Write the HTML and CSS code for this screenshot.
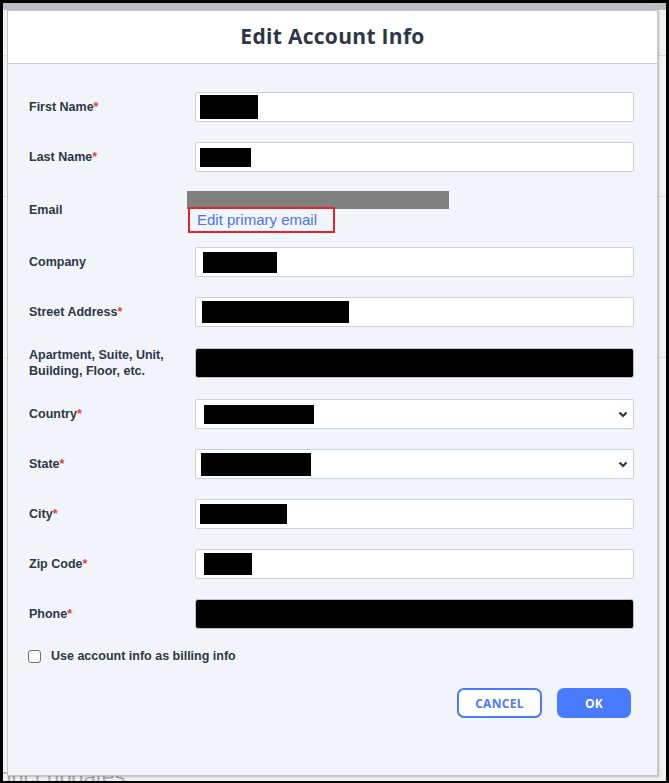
FILE: index.html
```
<!DOCTYPE html>
<html>
<head>
<meta charset="utf-8">
<link rel="stylesheet" href="styles.css">
</head>
<body>
<div class="screen">
  <div class="bgpage">
    <div class="bg-line l1"></div>
    <div class="bg-line l2"></div>
    <div class="bg-line l3"></div>
    <div class="bg-text">Product updates</div>
  </div>
  <div class="modal">
    <div class="modal-header"><h1 class="title">Edit Account Info</h1></div>
    <div class="modal-body">
      <div class="form">
        <label class="lbl">First Name<span class="req">*</span></label>
        <div class="field"><span class="redact" style="margin-left:4px;width:58px;height:24px"></span></div>

        <label class="lbl">Last Name<span class="req">*</span></label>
        <div class="field"><span class="redact" style="margin-left:4px;width:51px;height:19px"></span></div>

        <label class="lbl">Email</label>
        <div class="email-val">
          <div class="email-bar"></div>
          <a class="email-link" href="#">Edit primary email</a>
        </div>

        <label class="lbl">Company</label>
        <div class="field"><span class="redact" style="margin-left:7px;width:74px;height:21px"></span></div>

        <label class="lbl">Street Address<span class="req">*</span></label>
        <div class="field"><span class="redact" style="margin-left:6px;width:147px;height:22px"></span></div>

        <label class="lbl two">Apartment, Suite, Unit,<br>Building, Floor, etc.</label>
        <div class="field full"></div>

        <label class="lbl">Country<span class="req">*</span></label>
        <div class="field select"><span class="redact" style="margin-left:8px;width:110px;height:19px"></span><svg class="chev" width="10" height="7" viewBox="0 0 10 7"><path d="M1.5 1.5 L5 5 L8.5 1.5" fill="none" stroke="#2d3748" stroke-width="2.2"/></svg></div>

        <label class="lbl">State<span class="req">*</span></label>
        <div class="field select"><span class="redact" style="margin-left:5px;width:110px;height:23px"></span><svg class="chev" width="10" height="7" viewBox="0 0 10 7"><path d="M1.5 1.5 L5 5 L8.5 1.5" fill="none" stroke="#2d3748" stroke-width="2.2"/></svg></div>

        <label class="lbl">City<span class="req">*</span></label>
        <div class="field"><span class="redact" style="margin-left:4px;width:87px;height:20px"></span></div>

        <label class="lbl">Zip Code<span class="req">*</span></label>
        <div class="field"><span class="redact" style="margin-left:8px;width:48px;height:22px"></span></div>

        <label class="lbl">Phone<span class="req">*</span></label>
        <div class="field full"></div>
      </div>

      <label class="check-row"><span class="checkbox"></span><span class="check-label">Use account info as billing info</span></label>

      <div class="actions">
        <button class="btn btn-outline">CANCEL</button>
        <button class="btn btn-primary">OK</button>
      </div>
    </div>
  </div>
</div>
</body>
</html>
```
FILE: styles.css
```
* { box-sizing: border-box; }
html, body { margin: 0; padding: 0; }
body {
  background: #000;
  width: 669px;
  height: 783px;
  overflow: hidden;
  padding: 3px 3px 2px 3px;
  font-family: "Liberation Sans", Arial, sans-serif;
}
.screen {
  position: relative;
  width: 663px;
  height: 778px;
  overflow: hidden;
  background: linear-gradient(#bdbec2 0, #bdbec2 7px, #f1f2f4 7px);
}
.bgpage {
  height: 100%;
  display: flex;
  flex-direction: column;
}
.bg-line { height: 1px; background: #dadde2; }
.l1 { margin-top: 52px; }
.l2 { margin-top: 140px; }
.l3 { margin-top: 160px; }
.bg-text {
  margin-top: auto;
  margin-bottom: -9px;
  margin-left: -38px;
  font-size: 22px;
  color: #a9acb2;
  line-height: 26px;
}
.modal {
  position: absolute;
  left: 4px;
  top: 7px;
  width: 651px;
  height: 766px;
  background: #f1f5f9;
  border: 1px solid #c3c8d0;
  box-shadow: 1px 1px 2px rgba(0,0,0,0.25);
  display: flex;
  flex-direction: column;
}
.modal-header {
  height: 53px;
  background: #fff;
  border-bottom: 1px solid #c6cdd8;
  display: flex;
  align-items: center;
  justify-content: center;
  padding-bottom: 2px;
}
.title {
  margin: 0;
  font-family: "Open Sans", sans-serif;
  font-weight: 700;
  font-size: 21px;
  color: #2d3748;
  letter-spacing: 0.3px;
}
.modal-body {
  padding: 28px 22px 0 21px;
}
.form {
  display: grid;
  grid-template-columns: 166px 439px;
  grid-template-rows: 30px 30px 35px 30px 30px 32px;
  grid-auto-rows: 30px;
  row-gap: 20px;
  align-items: center;
}
.lbl {
  font-size: 12.5px;
  font-weight: 700;
  color: #2d3748;
  line-height: 16px;
}
.req { color: #e53e3e; }
.field {
  height: 30px;
  background: #fff;
  border: 1px solid #c9d1dd;
  border-radius: 2px;
  display: flex;
  align-items: center;
}
.field.full {
  background: #000;
  border-color: #b8c0cc;
  border-radius: 3px;
}
.redact {
  display: block;
  background: #000;
}
.select { justify-content: space-between; padding-right: 4px; }
.chev { margin-right: 1px; }
.email-val {
  margin-left: -8px;
  margin-top: -1px;
  align-self: start;
  height: 36px;
  display: flex;
  flex-direction: column;
  align-items: flex-start;
}
.email-bar {
  width: 262px;
  height: 18px;
  background: #808080;
  flex-shrink: 0;
}
.email-link {
  margin-top: -2px;
  margin-left: 1px;
  border: 2px solid #e8212b;
  padding: 2px 16px 3px 7px;
  font-size: 15px;
  line-height: 17px;
  color: #4a74f0;
  text-decoration: none;
  flex-shrink: 0;
}
.check-row {
  display: flex;
  align-items: center;
  margin-top: 20px;
  margin-left: -1px;
  height: 14px;
}
.checkbox {
  width: 13px;
  height: 13px;
  border: 1px solid #707070;
  border-radius: 3px;
  background: #fff;
}
.check-label {
  margin-left: 10px;
  font-size: 12.5px;
  font-weight: 700;
  color: #2d3748;
}
.actions {
  display: flex;
  justify-content: flex-end;
  gap: 15px;
  margin-top: 25px;
  padding-right: 4px;
}
.btn {
  height: 30px;
  border-radius: 7px;
  font-family: "Open Sans", sans-serif;
  font-weight: 700;
  font-size: 12px;
  letter-spacing: 0.3px;
  cursor: pointer;
}
.btn-outline {
  width: 85px;
  background: #fff;
  border: 2px solid #4a7bff;
  color: #4a7bff;
}
.btn-primary {
  width: 74px;
  background: #4a7bff;
  border: 2px solid #4a7bff;
  color: #fff;
}
```
